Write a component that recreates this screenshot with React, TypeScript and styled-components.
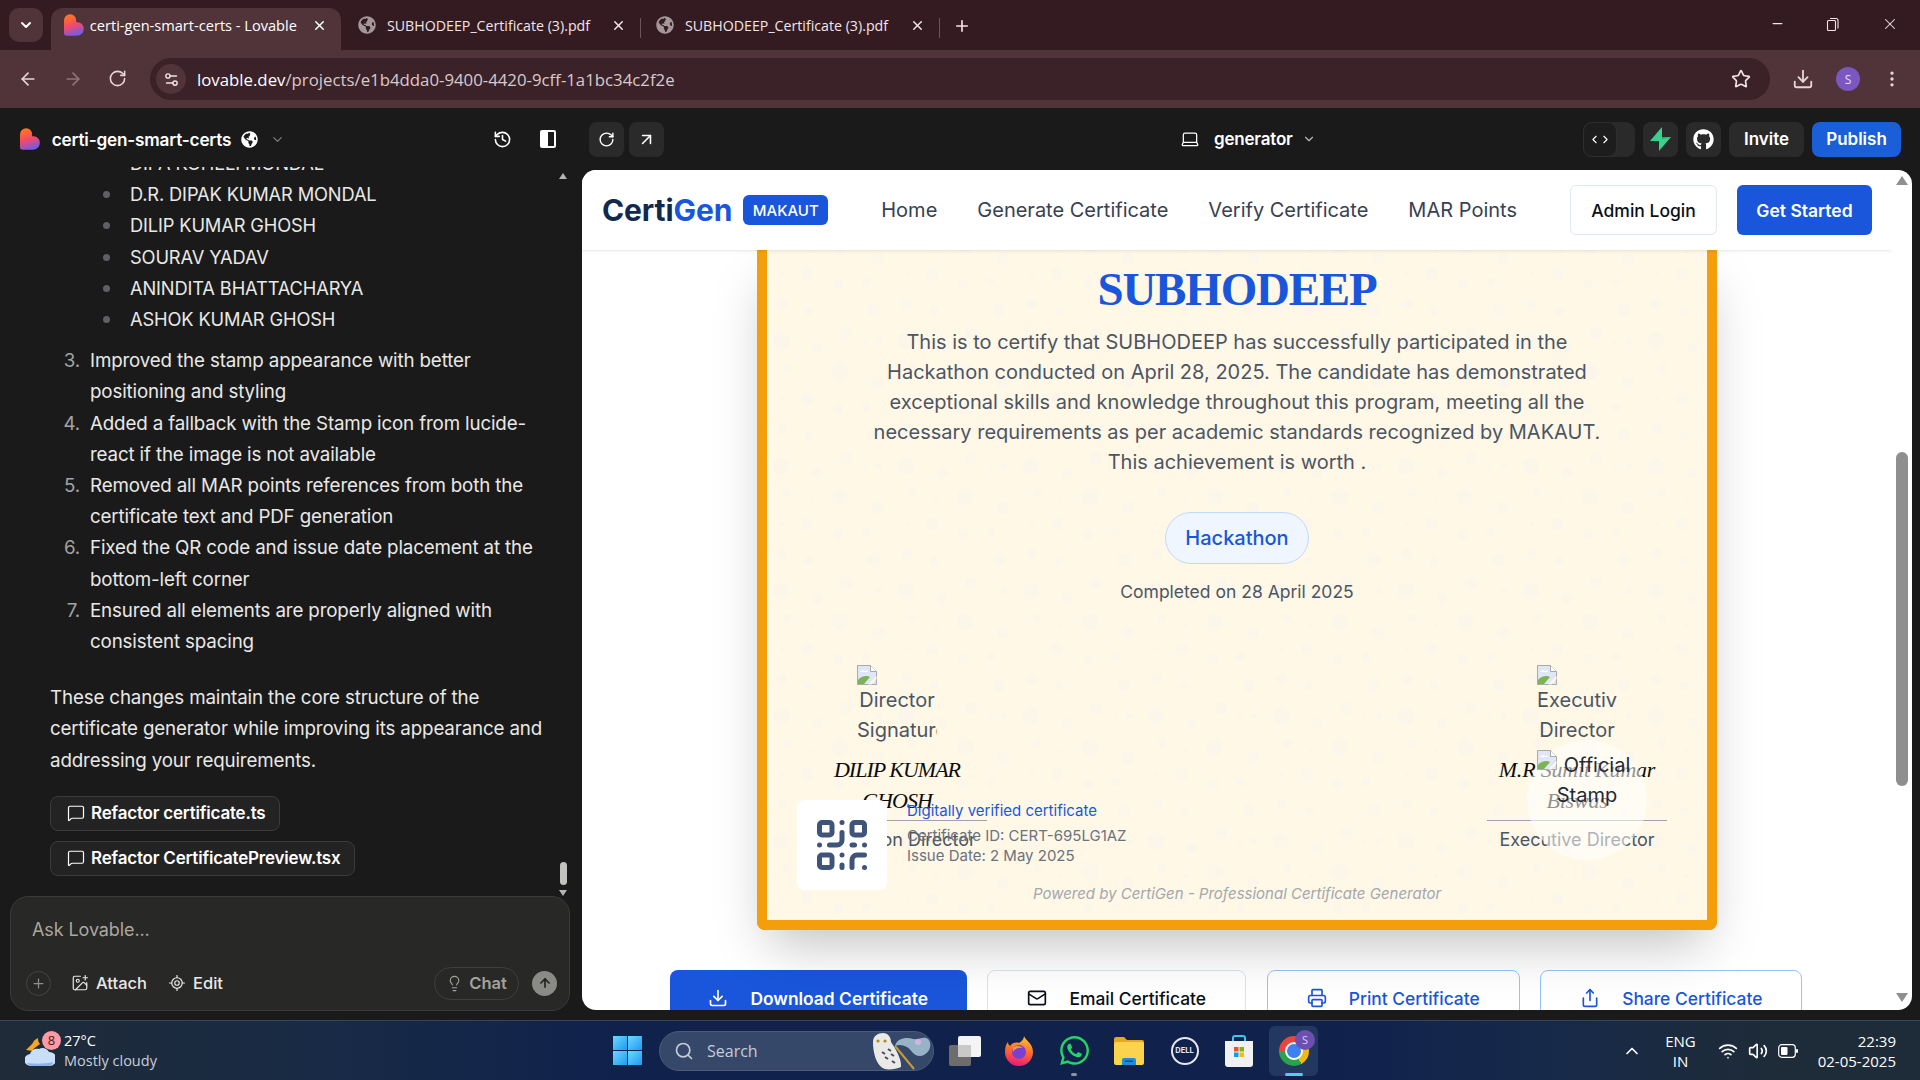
import styled, { createGlobalStyle, css } from 'styled-components'
import {
  ArrowLeft, ArrowRight, ArrowUp, ArrowUpRight, ChevronDown, ChevronLeft, ChevronRight, ChevronUp, Download, EllipsisVertical,
  History, ImagePlus, Laptop, Lightbulb, LocateFixed, Mail, MessageSquare, Minus, Plus, Printer, QrCode, RotateCw, Search,
  Settings2, Share, Star, Volume2, Wifi, X,
} from 'lucide-react'
import { FaGithub, FaGlobeAmericas, FaWhatsapp } from 'react-icons/fa'

const UI = `"Open Sans", "Noto Sans", sans-serif`
const INTER = `Inter, "Noto Sans", sans-serif`
const SERIF = `"Liberation Serif", serif`

const Global = createGlobalStyle`
  html, body { margin: 0; height: 100%; overflow: hidden; background: #1a1a1a; }
  * { box-sizing: border-box; }
`

const Page = styled.div`
  width: 1920px;
  height: 1080px;
  display: flex;
  flex-direction: column;
  overflow: hidden;
  font-family: ${INTER};
`

/* ---------- chrome ---------- */
const TabStrip = styled.div`
  height: 50px;
  flex: none;
  background: #331b21;
  display: flex;
  align-items: flex-end;
  padding-left: 9px;
  color: #f3e4e7;
  font-family: ${UI};
`
const TabMenu = styled.div`
  width: 34px;
  height: 34px;
  margin: 0 8px 8px 0;
  border-radius: 10px;
  background: #50343a;
  display: flex;
  align-items: center;
  justify-content: center;
`
const Tab = styled.div<{ $active?: boolean; $w: number; $pad?: number }>`
  width: ${p => p.$w}px;
  height: 42px;
  flex: none;
  display: flex;
  align-items: center;
  padding: 0 14px 8px ${p => p.$pad ?? 13}px;
  font-size: 14.2px;
  position: relative;
  border-radius: 12px 12px 0 0;
  white-space: nowrap;
  ${p => p.$active && css`
    background: #50343a;
    color: #fff;
    font-size: 14.6px;
  `}
`
const TabTitle = styled.span<{ $gap?: number }>`
  flex: 1;
  margin-left: ${p => p.$gap ?? 11}px;
  overflow: hidden;
`
const TabSep = styled.div`
  width: 1px;
  height: 20px;
  background: #6c5459;
  flex: none;
  margin-bottom: 12px;
`
const NewTab = styled.div`
  margin: 0 0 15px 13px;
  display: flex;
`
const WinControls = styled.div`
  margin-left: auto;
  align-self: stretch;
  display: flex;
  align-items: center;
  gap: 41px;
  padding: 0 21px 3px 0;
`
const Toolbar = styled.div`
  height: 58px;
  flex: none;
  background: #50343a;
  display: flex;
  align-items: center;
  padding: 0 18px 0 18px;
  color: #e8d5d9;
`
const NavIcons = styled.div`
  display: flex;
  gap: 25px;
  width: 132px;
  flex: none;
`
const UrlBar = styled.div`
  width: 1620px;
  flex: none;
  height: 42px;
  border-radius: 21px;
  background: #3a2228;
  display: flex;
  align-items: center;
  padding: 0 19px 0 6px;
  font-family: ${UI};
  font-size: 16.8px;
  color: #cdbdc0;
`
const SiteInfo = styled.div`
  width: 30px;
  height: 30px;
  border-radius: 50%;
  background: #50343a;
  display: flex;
  align-items: center;
  justify-content: center;
  margin-right: 11px;
  color: #f1e3e6;
`
const UrlHost = styled.span`
  color: #fff;
`
const UrlRest = styled.span`
  flex: 1;
  color: #d9c9cc;
`
const ToolRight = styled.div`
  flex: 1;
  display: flex;
  align-items: center;
  justify-content: space-between;
  padding-left: 22px;
`
const Avatar = styled.div`
  width: 24px;
  height: 24px;
  border-radius: 50%;
  background: #7b57c0;
  color: #e9dff7;
  font: 12px ${UI};
  display: flex;
  align-items: center;
  justify-content: center;
`

/* ---------- lovable header ---------- */
const AppHeader = styled.div`
  height: 62px;
  flex: none;
  background: #1a1a1a;
  display: flex;
  align-items: center;
  color: #fff;
`
const ProjectSide = styled.div`
  width: 589px;
  flex: none;
  display: flex;
  align-items: center;
  padding-left: 20px;
`
const ProjectName = styled.span`
  font-size: 17.2px;
  font-weight: 600;
  margin: 0 10px 0 12px;
  letter-spacing: -0.2px;
`
const HeadIcons = styled.div`
  margin-left: auto;
  margin-right: 33px;
  display: flex;
  gap: 28px;
  align-items: center;
`
const SquareBtn = styled.div`
  width: 35px;
  height: 35px;
  border-radius: 8px;
  background: #2a2a2a;
  display: flex;
  align-items: center;
  justify-content: center;
`
const PreviewTools = styled.div`
  width: 591px;
  flex: none;
  display: flex;
  gap: 5px;
`
const Generator = styled.div`
  display: flex;
  align-items: center;
  font-size: 17px;
  font-weight: 600;
  gap: 14px;
  width: 403px;
  flex: none;
  letter-spacing: -0.2px;
`
const HeadRight = styled.div`
  display: flex;
  gap: 8px;
  align-items: center;
`
const CodeToggle = styled.div`
  width: 52px;
  height: 35px;
  border-radius: 9px;
  background: #2a2a2a;
  display: flex;
`
const CodeKnob = styled.div`
  width: 34px;
  border-radius: 9px;
  background: #1d1d1d;
  border: 1px solid #2e2e2e;
  display: flex;
  align-items: center;
  justify-content: center;
`
const HeadBtn = styled.div<{ $primary?: boolean; $w: number }>`
  width: ${p => p.$w}px;
  height: 35px;
  border-radius: 8px;
  background: ${p => (p.$primary ? '#1a5fd8' : '#2a2a2a')};
  display: flex;
  align-items: center;
  justify-content: center;
  font-size: 17px;
  font-weight: 600;
`

/* ---------- main ---------- */
const Main = styled.div`
  flex: 1;
  display: flex;
  min-height: 0;
  background: #1a1a1a;
`
const Sidebar = styled.aside`
  width: 582px;
  flex: none;
  display: flex;
  flex-direction: column;
  color: #e8e8e6;
`
const ChatArea = styled.div`
  height: 729px;
  margin-top: -3px;
  flex: none;
  display: flex;
`
const Messages = styled.div`
  width: 557px;
  flex: none;
  overflow: hidden;
  padding-left: 50px;
  font-size: 18.75px;
  line-height: 31.2px;
  letter-spacing: -0.15px;
`
const Bullets = styled.ul`
  list-style: none;
  margin: -19px 0 0 0;
  padding: 0 0 0 80px;
  font-size: 18.3px;
`
const Bullet = styled.li`
  position: relative;
  height: 31.2px;
  white-space: nowrap;
  &::before {
    content: '';
    position: absolute;
    left: -27px;
    top: 12px;
    width: 7px;
    height: 7px;
    border-radius: 50%;
    background: #5f5f66;
  }
`
const Steps = styled.ol`
  list-style: none;
  margin: 10px 0 0 0;
  padding: 0;
`
const Step = styled.li`
  display: flex;
  white-space: nowrap;
`
const StepNo = styled.span`
  width: 40px;
  flex: none;
  text-align: right;
  padding-right: 10px;
  color: #a3a3a3;
`
const Paragraph = styled.p`
  margin: 25px 0 20px;
  white-space: nowrap;
`
const Chip = styled.div<{ $w: number }>`
  width: ${p => p.$w}px;
  height: 35px;
  margin-bottom: 10px;
  border: 1px solid #3b3b3b;
  border-radius: 8px;
  background: #232323;
  display: flex;
  align-items: center;
  gap: 6px;
  padding-left: 16px;
  font-size: 17px;
  font-weight: 600;
  color: #fff;
  letter-spacing: -0.2px;
`
const ScrollTrack = styled.div`
  width: 12px;
  flex: none;
  display: flex;
  flex-direction: column;
  align-items: center;
  padding-top: 6px;
`
const ArrowGlyph = styled.div<{ $down?: boolean }>`
  width: 0;
  height: 0;
  border-left: 4.5px solid transparent;
  border-right: 4.5px solid transparent;
  ${p => (p.$down ? 'border-top: 6px solid #b4b4b0;' : 'border-bottom: 6px solid #b4b4b0;')}
`
const MiniThumb = styled.div`
  width: 7px;
  height: 23px;
  border-radius: 4px;
  background: #c2c2be;
  margin: auto 0 5px;
`
const Composer = styled.div`
  height: 115px;
  width: 560px;
  margin-left: 10px;
  border: 1px solid #3a3a3a;
  border-radius: 18px;
  background: #282827;
  display: flex;
  flex-direction: column;
  padding: 22px 12px 0 15px;
`
const Placeholder = styled.div`
  font-size: 18px;
  color: #aaa79e;
  padding-left: 6px;
  line-height: 22px;
  letter-spacing: -0.1px;
`
const ComposerBar = styled.div`
  margin-top: 25px;
  display: flex;
  align-items: center;
  height: 34px;
  font-size: 16.5px;
  font-weight: 500;
  color: #e8e8e6;
`
const CircleBtn = styled.div`
  width: 25px;
  height: 25px;
  border: 1px solid #454545;
  border-radius: 50%;
  display: flex;
  align-items: center;
  justify-content: center;
  margin-right: 20px;
  color: #8e8e8e;
`
const BarItem = styled.div`
  display: flex;
  align-items: center;
  gap: 7px;
  margin-right: 21px;
`
const ChatPill = styled.div`
  margin-left: auto;
  width: 85px;
  height: 33px;
  border: 1px solid #3f3f3f;
  border-radius: 17px;
  display: flex;
  align-items: center;
  justify-content: center;
  gap: 6px;
  color: #a3a39d;
  font-weight: 600;
`
const SendBtn = styled.div`
  width: 25px;
  height: 25px;
  margin-left: 13px;
  border-radius: 50%;
  background: #8a8a87;
  display: flex;
  align-items: center;
  justify-content: center;
  color: #262626;
`

/* ---------- preview ---------- */
const Preview = styled.section`
  width: 1330px;
  height: 840px;
  flex: none;
  background: #fff;
  border-radius: 14px;
  overflow: hidden;
  display: flex;
`
const PreviewBody = styled.div`
  flex: 1;
  min-width: 0;
  display: flex;
  flex-direction: column;
  overflow: hidden;
`
const SiteNav = styled.nav`
  height: 80px;
  flex: none;
  display: flex;
  align-items: center;
  padding: 0 20px 0 20px;
  background: #fff;
  box-shadow: 0 1px 3px rgba(0, 0, 0, 0.1);
  position: relative;
  z-index: 2;
`
const Logo = styled.div`
  font-size: 30px;
  font-weight: 700;
  color: #10294f;
  letter-spacing: -0.1px;
  span { color: #1a56db; }
`
const Badge = styled.div`
  margin-left: 11px;
  width: 85px;
  height: 30px;
  background: #1a56db;
  color: #fff;
  border-radius: 6px;
  font-size: 15px;
  font-weight: 500;
  display: flex;
  align-items: center;
  justify-content: center;
`
const NavLinks = styled.div`
  margin-left: 53px;
  display: flex;
  gap: 40px;
  font-size: 20px;
  color: #374151;
`
const NavActions = styled.div`
  margin-left: auto;
  display: flex;
  gap: 20px;
`
const NavBtn = styled.div<{ $primary?: boolean; $w: number }>`
  width: ${p => p.$w}px;
  height: 50px;
  border-radius: 6px;
  display: flex;
  align-items: center;
  justify-content: center;
  font-size: 17.5px;
  font-weight: 500;
  ${p => p.$primary
    ? css`background: #1a56db; color: #fff; font-weight: 600;`
    : css`background: #fff; color: #0b0f19; border: 1px solid #e2e8f0;`}
`

const dots = [
  [80, 17, 8], [118, 28, 6], [47, 44, 6], [78, 54, 5], [106, 52, 4], [27, 13, 4], [22, 74, 5], [49, 81, 4],
  [114, 80, 6], [86, 103, 6], [21, 111, 8], [57, 118, 5], [119, 111, 3], [105, 112, 2], [51, 21, 2], [22, 44, 2],
]
const dotLayers = dots
  .map(([x, y, r]) => `radial-gradient(circle at ${x}px ${y}px, #fcf5ea ${r}px, transparent ${r + 0.6}px)`)
  .join(',')

const Certificate = styled.article`
  width: 960px;
  height: 680px;
  flex: none;
  align-self: center;
  position: relative;
  border: 10px solid #f59e0b;
  border-top: 0;
  border-radius: 0 0 8px 8px;
  background-color: #fff8e7;
  background-image: ${dotLayers};
  background-size: 125px 125px;
  background-position: -7px 105px;
  background-clip: padding-box;
  box-shadow: 0 25px 50px -12px rgba(0, 0, 0, 0.25);
  display: flex;
  flex-direction: column;
  align-items: center;
  padding-top: 9px;
`
const Recipient = styled.h1`
  margin: 0;
  font: bold 47px/60px ${SERIF};
  letter-spacing: -1.2px;
  color: #1a56db;
`
const Statement = styled.p`
  margin: 8px 0 0;
  text-align: center;
  font-size: 20px;
  line-height: 30px;
  color: #4b5563;
  white-space: nowrap;
`
const EventPill = styled.div`
  margin-top: 35px;
  width: 144px;
  height: 52px;
  border-radius: 26px;
  background: #eff6ff;
  border: 1px solid #bfdbfe;
  color: #1a56db;
  font-size: 20px;
  font-weight: 500;
  display: flex;
  align-items: center;
  justify-content: center;
`
const Completed = styled.div`
  margin-top: 17px;
  font-size: 17.5px;
  line-height: 22px;
  color: #4b5563;
`
const Signatures = styled.div`
  margin-top: 62px;
  align-self: stretch;
  display: flex;
  justify-content: space-between;
  padding: 0 40px;
`
const SigBlock = styled.div`
  width: 180px;
  display: flex;
  flex-direction: column;
  align-items: center;
  text-align: center;
`
const SigImage = styled.div`
  width: 80px;
  height: 80px;
  overflow: hidden;
  font-size: 20px;
  line-height: 30px;
  color: #4b5563;
  white-space: nowrap;
  svg { display: block; height: 20px; margin-bottom: 0; }
`
const SigName = styled.div<{ $wide?: boolean }>`
  margin-top: 9px;
  height: 67px;
  width: 100%;
  font: italic 22px/31px ${SERIF};
  letter-spacing: ${p => (p.$wide ? '-0.2px' : '-1px')};
  color: #0b0b0b;
  border-bottom: 1px solid #9ca3af;
  white-space: nowrap;
`
const SigTitle = styled.div`
  margin-top: 8px;
  font-size: 18px;
  line-height: 22px;
  color: #4b5563;
  white-space: nowrap;
`
const Stamp = styled.div`
  position: absolute;
  left: 760px;
  top: 490px;
  width: 120px;
  height: 120px;
  border-radius: 50%;
  background: rgba(255, 255, 255, 0.55);
  padding: 10px 10px 0;
  font-size: 20px;
  line-height: 30px;
  color: #1f2937;
  text-align: center;
  svg { position: absolute; left: 10px; top: 10px; }
`
const StampWord = styled.span<{ $indent?: boolean }>`
  display: block;
  ${p => p.$indent && 'padding-left: 20px;'}
`
const QrCard = styled.div`
  position: absolute;
  left: 30px;
  top: 550px;
  width: 90px;
  height: 90px;
  border-radius: 8px;
  background: #fff;
  display: flex;
  align-items: center;
  justify-content: center;
  color: #3e5478;
`
const VerifyInfo = styled.div`
  position: absolute;
  left: 140px;
  top: 551px;
  font-size: 15px;
  line-height: 20px;
  color: #6b7280;
  white-space: nowrap;
`
const VerifyLink = styled.div`
  color: #1a56db;
  margin-bottom: 5px;
`
const PoweredBy = styled.div`
  position: absolute;
  left: 0;
  right: 0;
  top: 633px;
  text-align: center;
  font-style: italic;
  font-size: 15px;
  line-height: 22px;
  color: #a3a7ae;
`
const Actions = styled.div`
  margin-top: 40px;
  padding-right: 2px;
  display: flex;
  justify-content: center;
  gap: 20.5px;
  flex: none;
`
const ActionBtn = styled.div<{ $kind: 'solid' | 'plain' | 'blue'; $w: number }>`
  width: ${p => p.$w}px;
  height: 56px;
  border-radius: 8px;
  display: flex;
  align-items: center;
  justify-content: center;
  gap: 22px;
  font-size: 17.4px;
  font-weight: 500;
  ${p => p.$kind === 'solid' && css`background: #1a56db; color: #fff; font-weight: 600;`}
  ${p => p.$kind === 'plain' && css`border: 1px solid #dbe3f0; color: #0b0f19;`}
  ${p => p.$kind === 'blue' && css`border: 1px solid #93c5fd; color: #1a56db;`}
`
const PageScroll = styled.div`
  width: 20px;
  flex: none;
  display: flex;
  flex-direction: column;
  align-items: center;
  padding: 6px 0 8px;
`
const PageThumb = styled.div`
  width: 12px;
  height: 334px;
  margin-top: 267px;
  border-radius: 6px;
  background: #8f8f8f;
`
const PageArrow = styled.div<{ $down?: boolean }>`
  width: 0;
  height: 0;
  border-left: 6px solid transparent;
  border-right: 6px solid transparent;
  ${p => (p.$down ? 'margin-top: auto; border-top: 9px solid #8f8f8f;' : 'border-bottom: 9px solid #8f8f8f;')}
`

/* ---------- taskbar ---------- */
const Taskbar = styled.footer`
  height: 60px;
  flex: none;
  margin-top: 0;
  border-top: 1px solid #37445a;
  background: linear-gradient(90deg, #1f2b38 0%, #182a45 17%, #10224c 32%, #10224c 70%, #16294a 80%, #1e2b38 92%);
  display: flex;
  align-items: center;
  color: #fff;
  font-family: ${UI};
  position: relative;
`
const Weather = styled.div`
  width: 613px;
  flex: none;
  display: flex;
  align-items: center;
  padding-left: 25px;
  gap: 9px;
  font-size: 14.5px;
  line-height: 20px;
`
const WeatherIcon = styled.div`
  position: relative;
  width: 30px;
  height: 36px;
`
const WeatherBadge = styled.div`
  position: absolute;
  right: -6px;
  top: -2px;
  width: 19px;
  height: 19px;
  border-radius: 50%;
  background: #ff9aa5;
  color: #3a1c22;
  font-size: 13px;
  line-height: 19px;
  text-align: center;
`
const WeatherSub = styled.div`
  color: #c9d0da;
`
const WinLogo = styled.div`
  width: 29px;
  height: 29px;
  flex: none;
  display: grid;
  grid-template-columns: 1fr 1fr;
  gap: 1.5px;
  span { background: linear-gradient(135deg, #6fd6ff, #1b9cf2); }
`
const SearchPill = styled.div`
  margin-left: 17px;
  width: 275px;
  height: 40px;
  flex: none;
  border-radius: 20px;
  border: 1px solid #4a5a78;
  background: #36486a;
  display: flex;
  align-items: center;
  padding-left: 14px;
  gap: 13px;
  font-size: 16px;
  color: #c4ccd8;
  position: relative;
`
const SearchArt = styled.div`
  margin-left: auto;
  margin-right: 2px;
  display: flex;
`
const Apps = styled.div`
  display: flex;
  align-items: center;
  margin-left: 14px;
`
const AppSlot = styled.div<{ $w: number; $active?: boolean; $gap?: number }>`
  width: ${p => p.$w}px;
  height: 50px;
  margin-left: ${p => p.$gap ?? 0}px;
  display: flex;
  align-items: center;
  justify-content: center;
  position: relative;
  border-radius: 6px;
  ${p => p.$active && 'background: #23385e;'}
`
const RunDot = styled.div<{ $active?: boolean }>`
  position: absolute;
  bottom: 0;
  left: 50%;
  transform: translateX(-50%);
  height: 3px;
  border-radius: 2px;
  width: ${p => (p.$active ? 18 : 6)}px;
  background: ${p => (p.$active ? '#5cc6f5' : '#8b93a0')};
`
const ChromeIcon = styled.div`
  width: 30px;
  height: 30px;
  border-radius: 50%;
  background: conic-gradient(from 30deg, #f2b90f 0 120deg, #2ba24c 120deg 240deg, #e8453c 240deg 360deg);
  display: flex;
  align-items: center;
  justify-content: center;
  &::after {
    content: '';
    width: 14px;
    height: 14px;
    border-radius: 50%;
    background: #3d80f0;
    border: 2px solid #fff;
  }
`
const ChromeBadge = styled.div`
  position: absolute;
  right: 3px;
  top: 4px;
  width: 20px;
  height: 20px;
  border-radius: 50%;
  background: #6d4fb0;
  color: #d9ccf2;
  font-size: 11px;
  line-height: 20px;
  text-align: center;
`
const DellMark = styled.div`
  width: 28px;
  height: 28px;
  border-radius: 50%;
  border: 2px solid #e4e8ee;
  color: #e4e8ee;
  font: bold 7.5px/24px ${INTER};
  text-align: center;
`
const Tray = styled.div`
  margin-left: auto;
  display: flex;
  align-items: center;
  padding-right: 24px;
  font-size: 15px;
`
const Lang = styled.div`
  margin: 0 22px 0 23px;
  text-align: center;
  line-height: 20px;
`
const TrayIcons = styled.div`
  display: flex;
  align-items: center;
  gap: 10px;
  margin-right: 20px;
`
const Clock = styled.div`
  text-align: right;
  line-height: 20px;
`

/* ---------- drawings ---------- */
function LovableMark({ size }: { size: number }) {
  const id = `lov${size}`
  return (
    <svg width={size * 0.9} height={size} viewBox="0 0 22 24">
      <defs>
        <linearGradient id={id} x1="0.3" y1="0" x2="0.6" y2="1">
          <stop offset="0" stopColor="#ff7a1a" />
          <stop offset="0.5" stopColor="#f5486a" />
          <stop offset="1" stopColor="#6a5cf0" />
        </linearGradient>
      </defs>
      <path d="M7 0a6.5 6.5 0 0 1 6.5 6.5V9H15a7 7 0 0 1 7 7.5A7.5 7.5 0 0 1 14.5 24H3a3 3 0 0 1-3-3V7a7 7 0 0 1 7-7Z" fill={`url(#${id})`} />
    </svg>
  )
}

function BrokenImage() {
  return (
    <svg width="20" height="20" viewBox="0 0 20 20">
      <path d="M.5.5h13l6 6v13H.5Z" fill="#dfe6f5" stroke="#a9a9a9" />
      <path d="M13.5.5v6h6" fill="#fff" stroke="#a9a9a9" />
      <path d="M3 7c1-2 4-2 5-1 1-1 3-.5 3 1Z" fill="#fff" />
      <path d="M1 19v-4c3-4 9-5 12-3l-6 7Z" fill="#7cb356" />
      <path d="M11 19.5 19.5 11v3l-5 5.5Z" fill="#fff8e7" />
    </svg>
  )
}

function PanelIcon() {
  return (
    <svg width="16" height="18" viewBox="0 0 16 18">
      <rect x="1" y="1" width="14" height="16" fill="none" stroke="#fff" strokeWidth="2" rx="1" />
      <rect x="1" y="1" width="7" height="16" fill="#fff" />
    </svg>
  )
}

function BoltIcon() {
  return (
    <svg width="21" height="24" viewBox="0 0 21 24">
      <path d="M12 0v10h9L9 24V14H0Z" fill="#3ecf8e" />
      <path d="M12 0v10h9l-9 2Z" fill="#2ea86f" />
    </svg>
  )
}

function RestoreIcon() {
  return (
    <svg width="14" height="14" viewBox="0 0 14 14" fill="none" stroke="#f3e4e7" strokeWidth="1.1">
      <rect x="1.5" y="3.5" width="8" height="10" rx="1" />
      <path d="M4 1.5h6a2 2 0 0 1 2 2v8" />
    </svg>
  )
}

function CloudIcon() {
  return (
    <svg width="30" height="36" viewBox="0 0 30 36">
      <path d="M7 11 1 17l7 1c0-3 2-6 5-7-2-2-4-2-6 0Z" fill="#f5a623" />
      <path d="M13 5c-5 2-7 7-6 12l8-6c-2-2-2-4-2-6Z" fill="#f5a623" />
      <path d="M6 33a6 6 0 0 1-1-12c1-4 5-6 9-5 3-2 8-1 10 3a6 6 0 0 1 1 14Z" fill="#c9def7" />
      <path d="M6 33a6 6 0 0 1-4-3c6 1 20 1 26-1a6 6 0 0 1-3 4Z" fill="#8cb3ea" />
    </svg>
  )
}

function OwlIcon() {
  return (
    <svg width="62" height="38" viewBox="0 0 62 38">
      <path d="M26 14 45 37" stroke="#c69a35" strokeWidth="2" />
      <path d="M26 14c2-8 12-9 18-7 6 1 12-4 16 1 4 8-2 15-9 16-7 0-9-7-13-9-4-2-8-3-12-1Z" fill="#a9c6d8" opacity="0.85" />
      <circle cx="49" cy="10" r="3" fill="#d4b6dc" />
      <path d="M4 10c0-6 5-9 10-9 5 0 8 4 8 9 4 6 11 17 10 25-4 2-12 3-16 2C7 34 4 20 4 10Z" fill="#e9e9e6" />
      <path d="M13 20l3 2m3-5 3 2m-6 6 3 2m3-5 3 2m-2 5 3 2" stroke="#4d4766" strokeWidth="2" />
      <circle cx="9" cy="9" r="1.6" fill="#b58a1e" />
      <circle cx="16" cy="9" r="1.6" fill="#b58a1e" />
    </svg>
  )
}

function CopyIcon() {
  return (
    <svg width="32" height="30" viewBox="0 0 32 30">
      <rect x="0" y="9" width="22" height="21" rx="2" fill="#6d6d6d" />
      <rect x="9" y="0" width="23" height="21" rx="2" fill="#f4f4f4" />
      <rect x="9" y="9" width="13" height="12" fill="#c9c9c9" />
    </svg>
  )
}

function FirefoxIcon() {
  return (
    <svg width="30" height="30" viewBox="0 0 30 30">
      <defs>
        <linearGradient id="ffx" x1="0.6" y1="0" x2="0.4" y2="1">
          <stop offset="0" stopColor="#ffc22e" />
          <stop offset="0.5" stopColor="#ff6b2c" />
          <stop offset="1" stopColor="#e9177d" />
        </linearGradient>
      </defs>
      <path d="M20 0c1 4 9 7 9 16a14 14 0 0 1-28 0C1 11 2 8 4 6c0 2 1 3 2 4 2-4 8-4 9-3 3-2 5-4 5-7Z" fill="url(#ffx)" />
      <circle cx="15" cy="16" r="7" fill="#7b3fd1" />
      <path d="M9 12c3-3 8-2 10 0-3-1-8 0-10 4Z" fill="#ff9a2c" />
    </svg>
  )
}

function FolderIcon() {
  return (
    <svg width="30" height="28" viewBox="0 0 30 28">
      <path d="M0 2a2 2 0 0 1 2-2h8l3 3h15a2 2 0 0 1 2 2v3H0Z" fill="#e6a823" />
      <rect y="5" width="30" height="23" rx="2" fill="#fcd34d" />
      <path d="M8 28v-5a2 2 0 0 1 2-2h10a2 2 0 0 1 2 2v5Z" fill="#1d8ce0" />
      <rect x="11" y="23.5" width="8" height="1.5" fill="#0e4f8f" />
    </svg>
  )
}

function StoreIcon() {
  return (
    <svg width="28" height="32" viewBox="0 0 28 32">
      <path d="M8 6V3a2 2 0 0 1 2-2h8a2 2 0 0 1 2 2v3" fill="none" stroke="#3cc4f5" strokeWidth="2" />
      <path d="M0 6h28v23a3 3 0 0 1-3 3H3a3 3 0 0 1-3-3Z" fill="#f1f1f1" />
      <rect x="9" y="12" width="4.5" height="4.5" fill="#f25022" />
      <rect x="14.5" y="12" width="4.5" height="4.5" fill="#7fba00" />
      <rect x="9" y="17.5" width="4.5" height="4.5" fill="#00a4ef" />
      <rect x="14.5" y="17.5" width="4.5" height="4.5" fill="#ffb900" />
    </svg>
  )
}

function BatteryIcon() {
  return (
    <svg width="20" height="14" viewBox="0 0 20 14">
      <rect x="0.7" y="0.7" width="16.6" height="12.6" rx="3" fill="none" stroke="#fff" strokeWidth="1.2" />
      <rect x="3" y="3" width="6.5" height="8" rx="1" fill="#fff" />
      <rect x="18" y="5" width="2" height="4" rx="1" fill="#fff" />
    </svg>
  )
}

const steps: [string, string[]][] = [
  ['3.', ['Improved the stamp appearance with better', 'positioning and styling']],
  ['4.', ['Added a fallback with the Stamp icon from lucide-', 'react if the image is not available']],
  ['5.', ['Removed all MAR points references from both the', 'certificate text and PDF generation']],
  ['6.', ['Fixed the QR code and issue date placement at the', 'bottom-left corner']],
  ['7.', ['Ensured all elements are properly aligned with', 'consistent spacing']],
]
const names = ['DIPA KOHELI MONDAL', 'D.R. DIPAK KUMAR MONDAL', 'DILIP KUMAR GHOSH', 'SOURAV YADAV', 'ANINDITA BHATTACHARYA', 'ASHOK KUMAR GHOSH']

export default function App() {
  return (
    <Page>
      <Global />
      <TabStrip>
        <TabMenu><ChevronDown size={16} strokeWidth={3} color="#fff" /></TabMenu>
        <Tab $active $w={290}>
          <LovableMark size={22} />
          <TabTitle $gap={6}>certi-gen-smart-certs - Lovable</TabTitle>
          <X size={15} strokeWidth={2.4} />
        </Tab>
        <Tab $w={299} $pad={17}>
          <FaGlobeAmericas size={18} color="#a3979a" />
          <TabTitle>SUBHODEEP_Certificate (3).pdf</TabTitle>
          <X size={15} strokeWidth={2.4} />
        </Tab>
        <TabSep />
        <Tab $w={298} $pad={15}>
          <FaGlobeAmericas size={18} color="#a3979a" />
          <TabTitle>SUBHODEEP_Certificate (3).pdf</TabTitle>
          <X size={15} strokeWidth={2.4} />
        </Tab>
        <TabSep />
        <NewTab><Plus size={18} strokeWidth={2.2} /></NewTab>
        <WinControls>
          <Minus size={15} />
          <RestoreIcon />
          <X size={18} strokeWidth={1.4} />
        </WinControls>
      </TabStrip>

      <Toolbar>
        <NavIcons>
          <ArrowLeft size={20} />
          <ArrowRight size={20} color="#8d7479" />
          <RotateCw size={19} />
        </NavIcons>
        <UrlBar>
          <SiteInfo><Settings2 size={17} /></SiteInfo>
          <UrlHost>lovable.dev</UrlHost>
          <UrlRest>/projects/e1b4dda0-9400-4420-9cff-1a1bc34c2f2e</UrlRest>
          <Star size={20} color="#f1e3e6" />
        </UrlBar>
        <ToolRight>
          <Download size={22} />
          <Avatar>S</Avatar>
          <EllipsisVertical size={20} />
        </ToolRight>
      </Toolbar>

      <AppHeader>
        <ProjectSide>
          <LovableMark size={22} />
          <ProjectName>certi-gen-smart-certs</ProjectName>
          <FaGlobeAmericas size={17} color="#fff" />
          <ChevronDown size={15} color="#7d7d7d" style={{ marginLeft: 12 }} />
          <HeadIcons>
            <History size={19} />
            <PanelIcon />
          </HeadIcons>
        </ProjectSide>
        <PreviewTools>
          <SquareBtn><RotateCw size={17} /></SquareBtn>
          <SquareBtn><ArrowUpRight size={19} /></SquareBtn>
        </PreviewTools>
        <Generator>
          <Laptop size={20} strokeWidth={1.5} />
          generator
          <ChevronDown size={14} color="#bbb" style={{ marginLeft: -5 }} />
        </Generator>
        <HeadRight>
          <CodeToggle>
            <CodeKnob>
              <ChevronLeft size={13} style={{ marginRight: -1 }} />
              <ChevronRight size={13} style={{ marginLeft: -1 }} />
            </CodeKnob>
          </CodeToggle>
          <HeadBtn $w={35}><BoltIcon /></HeadBtn>
          <HeadBtn $w={35}><FaGithub size={21} /></HeadBtn>
          <HeadBtn $w={75}>Invite</HeadBtn>
          <HeadBtn $primary $w={89}>Publish</HeadBtn>
        </HeadRight>
      </AppHeader>

      <Main>
        <Sidebar>
          <ChatArea>
            <Messages>
              <Bullets>
                {names.map(n => <Bullet key={n}>{n}</Bullet>)}
              </Bullets>
              <Steps>
                {steps.map(([no, lines]) => (
                  <Step key={no}>
                    <StepNo>{no}</StepNo>
                    <div>{lines.map(l => <div key={l}>{l}</div>)}</div>
                  </Step>
                ))}
              </Steps>
              <Paragraph>
                These changes maintain the core structure of the<br />
                certificate generator while improving its appearance and<br />
                addressing your requirements.
              </Paragraph>
              <Chip $w={230}><MessageSquare size={18} strokeWidth={1.6} />Refactor certificate.ts</Chip>
              <Chip $w={305}><MessageSquare size={18} strokeWidth={1.6} />Refactor CertificatePreview.tsx</Chip>
            </Messages>
            <ScrollTrack>
              <ArrowGlyph />
              <MiniThumb />
              <ArrowGlyph $down />
            </ScrollTrack>
          </ChatArea>
          <Composer>
            <Placeholder>Ask Lovable...</Placeholder>
            <ComposerBar>
              <CircleBtn><Plus size={15} /></CircleBtn>
              <BarItem><ImagePlus size={18} strokeWidth={1.6} />Attach</BarItem>
              <BarItem><LocateFixed size={18} strokeWidth={1.6} />Edit</BarItem>
              <ChatPill><Lightbulb size={17} strokeWidth={1.6} />Chat</ChatPill>
              <SendBtn><ArrowUp size={14} strokeWidth={3} /></SendBtn>
            </ComposerBar>
          </Composer>
        </Sidebar>

        <Preview>
          <PreviewBody>
            <SiteNav>
              <Logo>Certi<span>Gen</span></Logo>
              <Badge>MAKAUT</Badge>
              <NavLinks>
                <span>Home</span>
                <span>Generate Certificate</span>
                <span>Verify Certificate</span>
                <span>MAR Points</span>
              </NavLinks>
              <NavActions>
                <NavBtn $w={147}>Admin Login</NavBtn>
                <NavBtn $primary $w={135}>Get Started</NavBtn>
              </NavActions>
            </SiteNav>

            <Certificate>
              <Recipient>SUBHODEEP</Recipient>
              <Statement>
                This is to certify that SUBHODEEP has successfully participated in the<br />
                Hackathon conducted on April 28, 2025. The candidate has demonstrated<br />
                exceptional skills and knowledge throughout this program, meeting all the<br />
                necessary requirements as per academic standards recognized by MAKAUT.<br />
                This achievement is worth .
              </Statement>
              <EventPill>Hackathon</EventPill>
              <Completed>Completed on 28 April 2025</Completed>
              <Signatures>
                <SigBlock>
                  <SigImage><BrokenImage />Director<br />Signature</SigImage>
                  <SigName>DILIP KUMAR<br />GHOSH</SigName>
                  <SigTitle>Education Director</SigTitle>
                </SigBlock>
                <SigBlock>
                  <SigImage><BrokenImage />Executive<br />Director</SigImage>
                  <SigName $wide>M.R Sumit Kumar<br />Biswas</SigName>
                  <SigTitle>Executive Director</SigTitle>
                </SigBlock>
              </Signatures>
              <Stamp>
                <BrokenImage />
                <StampWord $indent>Official</StampWord>
                <StampWord>Stamp</StampWord>
              </Stamp>
              <QrCard><QrCode size={60} /></QrCard>
              <VerifyInfo>
                <VerifyLink>Digitally verified certificate</VerifyLink>
                <div>Certificate ID: CERT-695LG1AZ</div>
                <div>Issue Date: 2 May 2025</div>
              </VerifyInfo>
              <PoweredBy>Powered by CertiGen - Professional Certificate Generator</PoweredBy>
            </Certificate>

            <Actions>
              <ActionBtn $kind="solid" $w={297}><Download size={20} />Download Certificate</ActionBtn>
              <ActionBtn $kind="plain" $w={259}><Mail size={20} />Email Certificate</ActionBtn>
              <ActionBtn $kind="blue" $w={253}><Printer size={20} />Print Certificate</ActionBtn>
              <ActionBtn $kind="blue" $w={262}><Share size={20} />Share Certificate</ActionBtn>
            </Actions>
          </PreviewBody>
          <PageScroll>
            <PageArrow />
            <PageThumb />
            <PageArrow $down />
          </PageScroll>
        </Preview>
      </Main>

      <Taskbar>
        <Weather>
          <WeatherIcon><CloudIcon /><WeatherBadge>8</WeatherBadge></WeatherIcon>
          <div>
            <div>27°C</div>
            <WeatherSub>Mostly cloudy</WeatherSub>
          </div>
        </Weather>
        <WinLogo><span /><span /><span /><span /></WinLogo>
        <SearchPill>
          <Search size={20} />
          Search
          <SearchArt><OwlIcon /></SearchArt>
        </SearchPill>
        <Apps>
          <AppSlot $w={34}><CopyIcon /></AppSlot>
          <AppSlot $w={56} $gap={9}><FirefoxIcon /></AppSlot>
          <AppSlot $w={54}><FaWhatsapp size={33} color="#25d366" /><RunDot /></AppSlot>
          <AppSlot $w={56}><FolderIcon /></AppSlot>
          <AppSlot $w={55}><DellMark>DELL</DellMark></AppSlot>
          <AppSlot $w={53}><StoreIcon /></AppSlot>
          <AppSlot $w={49} $active $gap={4}>
            <ChromeIcon />
            <ChromeBadge>S</ChromeBadge>
            <RunDot $active />
          </AppSlot>
        </Apps>
        <Tray>
          <ChevronUp size={20} />
          <Lang>ENG<br />IN</Lang>
          <TrayIcons>
            <Wifi size={20} />
            <Volume2 size={20} />
            <BatteryIcon />
          </TrayIcons>
          <Clock>22:39<br />02-05-2025</Clock>
        </Tray>
      </Taskbar>
    </Page>
  )
}
